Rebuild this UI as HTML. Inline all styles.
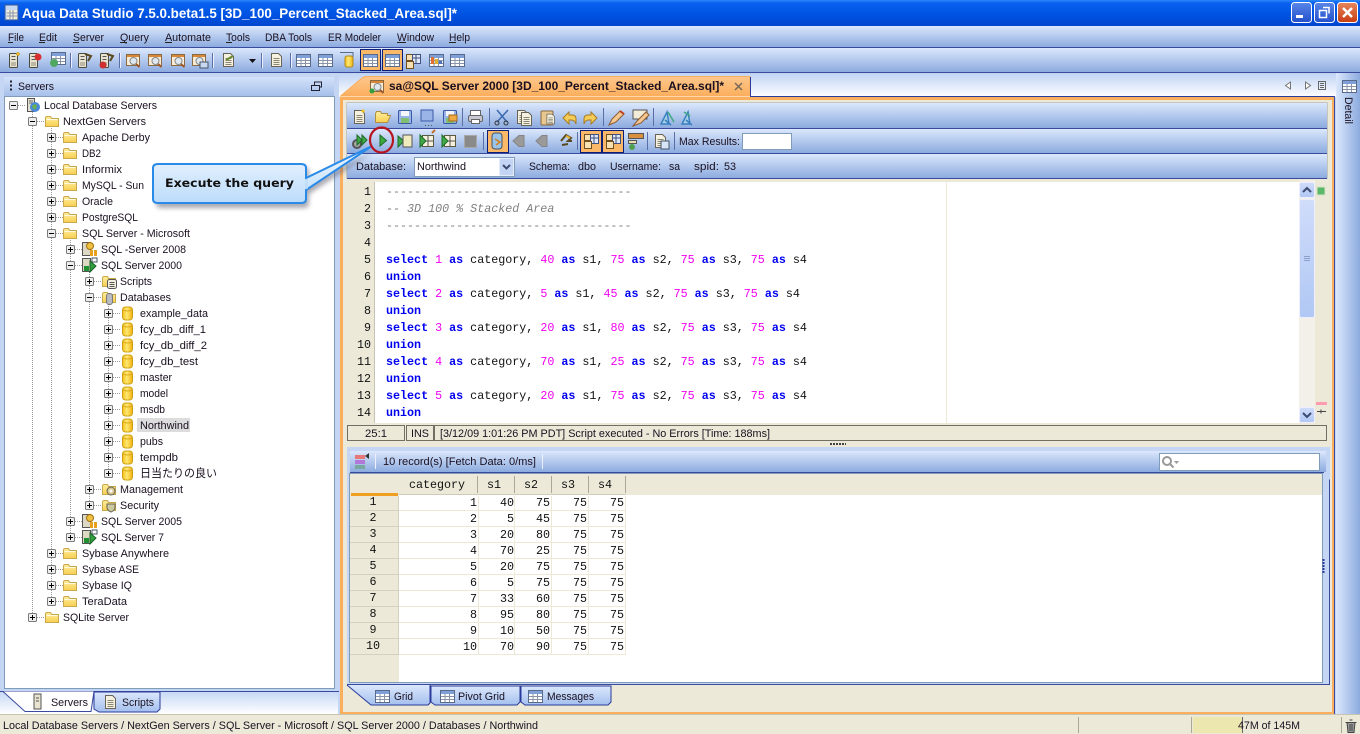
<!DOCTYPE html>
<html><head><meta charset="utf-8"><title>Aqua Data Studio</title>
<style>
html,body{margin:0;padding:0;background:#ece9d8;width:1360px;height:734px;overflow:hidden}
svg{display:block;position:absolute;left:0;top:0}
text{font-family:"Liberation Sans","Noto Sans CJK JP",sans-serif;font-size:11.4px;fill:#1a1020}
.m{font-family:"Liberation Mono",monospace;font-size:11.7px;fill:#111}
.k{font-weight:bold;fill:#0000f0}.n{fill:#f000f0}.c{fill:#808080;font-style:italic}.d{fill:#808080}
.r{text-anchor:end}.gc{text-anchor:middle}
</style></head><body>
<svg width="1360" height="734" viewBox="0 0 1360 734" xmlns="http://www.w3.org/2000/svg">
<defs>
<linearGradient id="title" x1="0" y1="0" x2="0" y2="1"><stop offset="0" stop-color="#2a86fb"/><stop offset=".12" stop-color="#0a60ee"/><stop offset=".5" stop-color="#0055e5"/><stop offset="1" stop-color="#0046cf"/></linearGradient>
<linearGradient id="bar" x1="0" y1="0" x2="0" y2="1"><stop offset="0" stop-color="#dbe7fc"/><stop offset="1" stop-color="#8cabdf"/></linearGradient>
<linearGradient id="tabs" x1="0" y1="0" x2="0" y2="1"><stop offset="0" stop-color="#bfd3f4"/><stop offset="1" stop-color="#ffffff"/></linearGradient>
<linearGradient id="head" x1="0" y1="0" x2="0" y2="1"><stop offset="0" stop-color="#d4e2fa"/><stop offset="1" stop-color="#a6c0ea"/></linearGradient>
<linearGradient id="orange" x1="0" y1="0" x2="0" y2="1"><stop offset="0" stop-color="#fdc78c"/><stop offset="1" stop-color="#fbae5c"/></linearGradient>
<linearGradient id="side" x1="0" y1="0" x2="1" y2="0"><stop offset="0" stop-color="#dbe7fc"/><stop offset="1" stop-color="#8cabdf"/></linearGradient>
<linearGradient id="tabb" x1="0" y1="0" x2="0" y2="1"><stop offset="0" stop-color="#dbe7fc"/><stop offset="1" stop-color="#a4c0ee"/></linearGradient>
<linearGradient id="call" x1="0" y1="0" x2="0" y2="1"><stop offset="0" stop-color="#f2f8ff"/><stop offset="1" stop-color="#bcdcfa"/></linearGradient>
<linearGradient id="fold" x1="0" y1="0" x2="0" y2="1"><stop offset="0" stop-color="#ffeea0"/><stop offset="1" stop-color="#f8cf50"/></linearGradient>
<linearGradient id="cyl" x1="0" y1="0" x2="1" y2="0"><stop offset="0" stop-color="#f4c020"/><stop offset=".45" stop-color="#ffe870"/><stop offset="1" stop-color="#eeb010"/></linearGradient>
<linearGradient id="close" x1="0" y1="0" x2="0" y2="1"><stop offset="0" stop-color="#e8865e"/><stop offset="1" stop-color="#c83c10"/></linearGradient>
<linearGradient id="wbtn" x1="0" y1="0" x2="0" y2="1"><stop offset="0" stop-color="#5a86e8"/><stop offset="1" stop-color="#2250cc"/></linearGradient>
<linearGradient id="sb" x1="0" y1="0" x2="0" y2="1"><stop offset="0" stop-color="#d0dcfa"/><stop offset="1" stop-color="#b0c8f4"/></linearGradient>
<filter id="sh" x="-20%" y="-20%" width="140%" height="150%"><feGaussianBlur stdDeviation="2.5"/></filter>

<g id="pl"><rect x=".5" y=".5" width="8" height="8" rx="1" fill="#eee" stroke="#7b7b7b"/><path d="M2 4.500h5M4.500 2v5" stroke="#000"/></g>
<g id="mi"><rect x=".5" y=".5" width="8" height="8" rx="1" fill="#eee" stroke="#7b7b7b"/><path d="M2 4.500h5" stroke="#000"/></g>
<g id="fo"><path d="M.5 3.500v9h13v-8h-7l-1-2h-4z" fill="url(#fold)" stroke="#c8a848"/><path d="M1.500 5.500h11" stroke="#fffbe0"/></g>
<g id="db"><rect x="2.500" y="1" width="10" height="13" rx="3" fill="url(#cyl)" stroke="#d0a010"/><path d="M3 4q4.500 2 9 0" stroke="#d8a820" fill="none"/></g>
<g id="srv"><rect x="1.500" y=".5" width="7" height="13" fill="#e4e0d0" stroke="#555"/><path d="M3 3h4M3 5h4" stroke="#666"/><circle cx="9" cy="9" r="5" fill="#4a8ad8"/><path d="M6 8q3-3 5-1l-1 4q-3 1-4-3z" fill="#6ab050"/></g>
<g id="s08"><rect x=".5" y="1.500" width="8" height="13" fill="#ddd8c4" stroke="#555"/><circle cx="8" cy="5" r="3.500" fill="#f0c040" stroke="#a07010"/><rect x="8" y="9" width="3" height="6" fill="#e8a020"/><rect x="12" y="9" width="3" height="6" fill="#e8a020"/></g>
<g id="s00"><rect x=".5" y="1.500" width="8" height="13" fill="#ddd8c4" stroke="#555"/><path d="M8 4l6 5-6 6z" fill="#30a040" stroke="#186020"/><rect x="2" y="9" width="5" height="5" fill="#209030"/><rect x="10" y="1" width="5" height="4" fill="#fff" stroke="#456"/></g>
<g id="scr"><path d="M.5 3.500v9h13v-8h-7l-1-2h-4z" fill="url(#fold)" stroke="#c8a848"/><rect x="5.500" y="5.500" width="9" height="9" rx="2" fill="#f4f0e0" stroke="#555"/><path d="M7.500 8.500h5M7.500 10.500h5M7.500 12.500h5" stroke="#555"/></g>
<g id="dbs"><path d="M.5 3.500v9h13v-8h-7l-1-2h-4z" fill="url(#fold)" stroke="#c8a848"/><rect x="4.500" y="3.500" width="6" height="11" rx="2.500" fill="#b8bcc0" stroke="#777"/></g>
<g id="mgt"><path d="M.5 3.500v9h13v-8h-7l-1-2h-4z" fill="url(#fold)" stroke="#c8a848"/><circle cx="9" cy="9" r="4" fill="#d8c890" stroke="#665"/><circle cx="9" cy="9" r="1.500" fill="#fff"/></g>
<g id="sec"><path d="M.5 3.500v9h13v-8h-7l-1-2h-4z" fill="url(#fold)" stroke="#c8a848"/><path d="M5 6h8v4q-1 3-4 4-3-1-4-4z" fill="#ccc8a0" stroke="#665"/></g>

<g id="doc"><path d="M2.500 1.500h7l3 3v10h-10z" fill="#f5f1e0" stroke="#6a6458"/><path d="M4.500 6.500h6M4.500 8.500h6M4.500 10.500h6M4.500 12.500h6" stroke="#8a8470"/></g>
<g id="sb1"><rect x=".5" y=".5" width="8" height="14" rx="1" fill="#e8e4d0" stroke="#4a4a40"/><path d="M2.500 3.500h4M2.500 6.500h4" stroke="#555"/><rect x="2" y="9" width="5" height="4" fill="#bcb8a4"/></g>
<g id="tbl"><rect x="1.500" y="2.500" width="14" height="12" fill="#fff" stroke="#5a6a8a"/><rect x="2" y="3" width="13" height="3" fill="#7f9fd8"/><path d="M2 8.500h13M2 11.500h13M6 6v8M10.500 6v8" stroke="#8a94a8"/></g>
<g id="mag"><rect x="1.500" y="2.500" width="13" height="11" fill="#f6ecd8" stroke="#8a6a40"/><rect x="2" y="3" width="12" height="2" fill="#d88838"/><circle cx="8.500" cy="9" r="3.500" fill="#dfe8f0" stroke="#888"/><path d="M11 12l3.500 3" stroke="#a05828" stroke-width="2"/></g>
<g id="prt"><rect x="3.500" y="1.500" width="10" height="5" fill="#fff" stroke="#666"/><rect x="1.500" y="6.500" width="14" height="6" rx="1.500" fill="#c8c8d0" stroke="#666"/><rect x="4.500" y="10.500" width="8" height="4" fill="#fff" stroke="#666"/></g>
<g id="sav"><rect x="1.500" y="1.500" width="13" height="13" rx="1" fill="#9ab4e8" stroke="#3a5aa8"/><rect x="4" y="2" width="8" height="5" fill="#f4f6fc"/><rect x="4" y="9" width="8" height="5" fill="#80c070"/></g>
<g id="ofo"><path d="M.5 4.500v9h12l3-7h-3v-2h-6l-1-2h-4z" fill="url(#fold)" stroke="#b09040"/></g>
<g id="rgrid"><rect x="3.500" y="2.500" width="11" height="11" fill="#f6f0dc" stroke="#5a5a40"/><path d="M3.500 8h11M9 3v10" stroke="#555"/><path d="M1 2l6 6-6 6z" fill="#40a848" stroke="#1c6c24"/></g>
<g id="back"><path d="M8 2.500h5v11H8l-6-5.500z" fill="#9a9a9a" stroke="#848484"/></g>
<g id="plug"><path d="M3 9l5-6 5 3-3 3h4M4 13l6-1" stroke="#5a4a20" stroke-width="2" fill="none"/><path d="M8 4l4 2" stroke="#e8b030" stroke-width="2"/></g>
<g id="gg"><rect x="1.500" y="1.500" width="7" height="6" fill="#f8e0b0" stroke="#705020"/><rect x="7.500" y="1.500" width="8" height="9" fill="#e0e8f8" stroke="#405080"/><rect x="1.500" y="8.500" width="7" height="7" fill="#f8e0b0" stroke="#705020"/><path d="M7.500 5h8M11 1.500v9" stroke="#405080"/></g>
</defs>

<!-- base -->
<rect width="1360" height="734" fill="#c4d6f4"/>
<!-- title bar -->
<rect width="1360" height="26" fill="url(#title)"/>
<rect x="5" y="5" width="13" height="15" fill="#c8d8f0" stroke="#385a9a"/><rect x="7" y="10" width="10" height="9" fill="#f4f0d8"/><path d="M7 13h10M7 16h10M10 10v9M13 10v9" stroke="#8a94b0"/>
<text x="22" y="18" textLength="435" lengthAdjust="spacingAndGlyphs" style="font-size:14px;font-weight:bold;fill:#fff">Aqua Data Studio 7.5.0.beta1.5 [3D_100_Percent_Stacked_Area.sql]*</text>
<rect x="1291.500" y="2.500" width="20" height="20" rx="3" fill="url(#wbtn)" stroke="#fff"/><rect x="1296" y="15" width="7" height="3" fill="#fff"/>
<rect x="1314.500" y="2.500" width="20" height="20" rx="3" fill="url(#wbtn)" stroke="#fff"/><path d="M1323 7.500h6v6M1319.500 10.500h7v7h-7z" stroke="#fff" stroke-width="1.500" fill="none"/>
<rect x="1337.500" y="2.500" width="20" height="20" rx="3" fill="url(#close)" stroke="#fff"/><path d="M1343 8l9 9M1352 8l-9 9" stroke="#fff" stroke-width="2.500"/>

<!-- menu -->
<rect y="26" width="1360" height="21" fill="url(#bar)"/><rect y="47" width="1360" height="1" fill="#3a4a9c"/>
<text x="8" y="41" textLength="16" lengthAdjust="spacingAndGlyphs">File</text><text x="39" y="41" textLength="18" lengthAdjust="spacingAndGlyphs">Edit</text><text x="73" y="41" textLength="31" lengthAdjust="spacingAndGlyphs">Server</text><text x="120" y="41" textLength="29" lengthAdjust="spacingAndGlyphs">Query</text><text x="165" y="41" textLength="46" lengthAdjust="spacingAndGlyphs">Automate</text><text x="226" y="41" textLength="24" lengthAdjust="spacingAndGlyphs">Tools</text><text x="265" y="41" textLength="47" lengthAdjust="spacingAndGlyphs">DBA Tools</text><text x="328" y="41" textLength="53" lengthAdjust="spacingAndGlyphs">ER Modeler</text><text x="397" y="41" textLength="37" lengthAdjust="spacingAndGlyphs">Window</text><text x="449" y="41" textLength="21" lengthAdjust="spacingAndGlyphs">Help</text>
<path d="M8 42.500h5M39 42.500h6M73 42.500h6M120 42.500h7M165 42.500h7M226 42.500h6M397 42.500h9M449 42.500h7" stroke="#222"/>

<!-- main toolbar -->
<rect y="48" width="1360" height="24" fill="url(#bar)"/><rect y="72" width="1360" height="1" fill="#3a4a9c"/>
<use href="#sb1" x="9" y="53"/><path d="M18 52l2 2-2 2-2-2z" fill="#f0c020" stroke="#b08010" stroke-width=".5"/>
<use href="#sb1" x="29" y="53"/><circle cx="38" cy="57" r="3.500" fill="#d83030"/>
<use href="#tbl" x="50" y="50"/><circle cx="54" cy="63" r="4" fill="#50a860"/>
<use href="#sb1" x="78" y="53"/><path d="M85 54l6 2-3 5" stroke="#5a4a20" stroke-width="2" fill="none"/>
<use href="#sb1" x="100" y="53"/><circle cx="103" cy="65" r="3.500" fill="#d03030"/><path d="M107 54l6 2-3 5" stroke="#5a4a20" stroke-width="2" fill="none"/>
<use href="#mag" x="125" y="52"/><use href="#mag" x="147" y="52"/><use href="#mag" x="170" y="52"/><use href="#mag" x="191" y="52"/><rect x="200" y="62" width="8" height="6" fill="#c8d8f0" stroke="#456"/>
<use href="#doc" x="221" y="52"/><path d="M226 60l7-4" stroke="#6a8a30" stroke-width="2"/>
<path d="M249 59h7l-3.500 4z" fill="#111"/>
<use href="#doc" x="269" y="52"/><use href="#tbl" x="295" y="52"/><use href="#tbl" x="317" y="52"/>
<rect x="345" y="56" width="8" height="11" rx="2" fill="url(#cyl)" stroke="#b08818"/><path d="M340 52.500h13v4" fill="none" stroke="#5a6a8a"/>
<rect x="360.500" y="49.500" width="20" height="21" fill="#fbb868" stroke="#0c1f78" stroke-width="1"/><use href="#tbl" x="362" y="52"/>
<rect x="382.500" y="49.500" width="20" height="21" fill="#fbb868" stroke="#0c1f78"/><use href="#tbl" x="384" y="52"/>
<use href="#gg" x="405" y="53"/><use href="#tbl" x="428" y="52"/><rect x="431" y="57" width="3" height="7" fill="#e07030"/><rect x="435" y="59" width="3" height="5" fill="#e0b030"/><rect x="439" y="61" width="3" height="3" fill="#5070c0"/>
<use href="#tbl" x="449" y="52"/>
<path d="M70.500 53v15M119.500 53v15M212.500 53v15M261.500 53v15M290.500 53v15" stroke="#5a6ea8"/><path d="M71.500 53v15M120.500 53v15M213.500 53v15M262.500 53v15M291.500 53v15" stroke="#eef"/>

<!-- left pane -->
<rect x="0" y="73" width="339" height="642" fill="#c4d6f4"/>
<rect x="4" y="77" width="330" height="19" fill="url(#head)"/>
<path d="M10 81.500h2M10 85.500h2M10 89.500h2" stroke="#223" stroke-width="2"/>
<text x="18" y="90" textLength="36" lengthAdjust="spacingAndGlyphs">Servers</text>
<path d="M311.500 85.500h8v5h-8zM314.500 85v-3h7v5h-2" fill="none" stroke="#223"/>
<rect x="4.500" y="96.500" width="330" height="592" fill="#fff" stroke="#7f9db9"/>
<rect x="0" y="689" width="338" height="25" fill="url(#tabs)"/>
<path d="M0 691.500h339" stroke="#3a4a9c"/>
<path d="M0 691.500h3l22 20h66l3-20" fill="#fff" stroke="#3a4a9c"/>
<path d="M94 692h66v17l-3 3h-58l-5-3z" fill="url(#tabb)" stroke="#2a3a9c"/>
<rect x="34" y="694" width="7" height="15" fill="#e8e4d0" stroke="#555"/><path d="M36 698h3M36 701h3" stroke="#555"/>
<text x="51" y="706" textLength="37" lengthAdjust="spacingAndGlyphs">Servers</text>
<use href="#doc" x="103" y="694"/><text x="122" y="706" textLength="32" lengthAdjust="spacingAndGlyphs">Scripts</text>

<!-- tree guides -->
<g stroke="#999" stroke-dasharray="1 1" fill="none">
<path d="M32.500 110v507M51.500 126v475M70.500 238v299M89.500 270v235M108.500 302v171"/>
<path d="M18 105.500h8M37 121.500h7M56 137.500h7M56 153.500h7M56 169.500h7M56 185.500h7M56 201.500h7M56 217.500h7M56 233.500h7M75 249.500h7M75 265.500h7M94 281.500h7M94 297.500h7"/>
<path d="M113 313.500h7M113 329.500h7M113 345.500h7M113 361.500h7M113 377.500h7M113 393.500h7M113 409.500h7M113 425.500h7M113 441.500h7M113 457.500h7M113 473.500h7"/>
<path d="M94 489.500h7M94 505.500h7M75 521.500h7M75 537.500h7M56 553.500h7M56 569.500h7M56 585.500h7M56 601.500h7M37 617.500h7"/>
</g>
<!-- tree -->
<use href="#mi" x="9" y="101"/><use href="#srv" x="26" y="98"/><text x="44" y="109" textLength="113" lengthAdjust="spacingAndGlyphs">Local Database Servers</text>
<use href="#mi" x="28" y="117"/><use href="#fo" x="45" y="114"/><text x="63" y="125" textLength="83" lengthAdjust="spacingAndGlyphs">NextGen Servers</text>
<use href="#pl" x="47" y="133"/><use href="#fo" x="63" y="130"/><text x="82" y="141" textLength="68" lengthAdjust="spacingAndGlyphs">Apache Derby</text>
<use href="#pl" x="47" y="149"/><use href="#fo" x="63" y="146"/><text x="82" y="157" textLength="19" lengthAdjust="spacingAndGlyphs">DB2</text>
<use href="#pl" x="47" y="165"/><use href="#fo" x="63" y="162"/><text x="82" y="173" textLength="40" lengthAdjust="spacingAndGlyphs">Informix</text>
<use href="#pl" x="47" y="181"/><use href="#fo" x="63" y="178"/><text x="82" y="189" textLength="62" lengthAdjust="spacingAndGlyphs">MySQL - Sun</text>
<use href="#pl" x="47" y="197"/><use href="#fo" x="63" y="194"/><text x="82" y="205" textLength="31" lengthAdjust="spacingAndGlyphs">Oracle</text>
<use href="#pl" x="47" y="213"/><use href="#fo" x="63" y="210"/><text x="82" y="221" textLength="56" lengthAdjust="spacingAndGlyphs">PostgreSQL</text>
<use href="#mi" x="47" y="229"/><use href="#fo" x="63" y="226"/><text x="82" y="237" textLength="108" lengthAdjust="spacingAndGlyphs">SQL Server - Microsoft</text>
<use href="#pl" x="66" y="245"/><use href="#s08" x="82" y="241"/><text x="101" y="253" textLength="85" lengthAdjust="spacingAndGlyphs">SQL -Server 2008</text>
<use href="#mi" x="66" y="261"/><use href="#s00" x="82" y="257"/><text x="101" y="269" textLength="81" lengthAdjust="spacingAndGlyphs">SQL Server 2000</text>
<use href="#pl" x="85" y="277"/><use href="#scr" x="102" y="274"/><text x="120" y="285" textLength="32" lengthAdjust="spacingAndGlyphs">Scripts</text>
<use href="#mi" x="85" y="293"/><use href="#dbs" x="102" y="290"/><text x="120" y="301" textLength="51" lengthAdjust="spacingAndGlyphs">Databases</text>
<use href="#pl" x="104" y="309"/><use href="#db" x="120" y="306"/><text x="140" y="317" textLength="68" lengthAdjust="spacingAndGlyphs">example_data</text>
<use href="#pl" x="104" y="325"/><use href="#db" x="120" y="322"/><text x="140" y="333" textLength="66" lengthAdjust="spacingAndGlyphs">fcy_db_diff_1</text>
<use href="#pl" x="104" y="341"/><use href="#db" x="120" y="338"/><text x="140" y="349" textLength="67" lengthAdjust="spacingAndGlyphs">fcy_db_diff_2</text>
<use href="#pl" x="104" y="357"/><use href="#db" x="120" y="354"/><text x="140" y="365" textLength="58" lengthAdjust="spacingAndGlyphs">fcy_db_test</text>
<use href="#pl" x="104" y="373"/><use href="#db" x="120" y="370"/><text x="140" y="381" textLength="32" lengthAdjust="spacingAndGlyphs">master</text>
<use href="#pl" x="104" y="389"/><use href="#db" x="120" y="386"/><text x="140" y="397" textLength="28" lengthAdjust="spacingAndGlyphs">model</text>
<use href="#pl" x="104" y="405"/><use href="#db" x="120" y="402"/><text x="140" y="413" textLength="25" lengthAdjust="spacingAndGlyphs">msdb</text>
<use href="#pl" x="104" y="421"/><use href="#db" x="120" y="418"/><rect x="137" y="418" width="53" height="14" fill="#dcdcdc"/><text x="140" y="429" textLength="49" lengthAdjust="spacingAndGlyphs">Northwind</text>
<use href="#pl" x="104" y="437"/><use href="#db" x="120" y="434"/><text x="140" y="445" textLength="23" lengthAdjust="spacingAndGlyphs">pubs</text>
<use href="#pl" x="104" y="453"/><use href="#db" x="120" y="450"/><text x="140" y="461" textLength="38" lengthAdjust="spacingAndGlyphs">tempdb</text>
<use href="#pl" x="104" y="469"/><use href="#db" x="120" y="466"/><text x="140" y="477" textLength="77" lengthAdjust="spacingAndGlyphs">日当たりの良い</text>
<use href="#pl" x="85" y="485"/><use href="#mgt" x="102" y="482"/><text x="120" y="493" textLength="63" lengthAdjust="spacingAndGlyphs">Management</text>
<use href="#pl" x="85" y="501"/><use href="#sec" x="102" y="498"/><text x="120" y="509" textLength="39" lengthAdjust="spacingAndGlyphs">Security</text>
<use href="#pl" x="66" y="517"/><use href="#s08" x="82" y="513"/><text x="101" y="525" textLength="81" lengthAdjust="spacingAndGlyphs">SQL Server 2005</text>
<use href="#pl" x="66" y="533"/><use href="#s00" x="82" y="529"/><text x="101" y="541" textLength="63" lengthAdjust="spacingAndGlyphs">SQL Server 7</text>
<use href="#pl" x="47" y="549"/><use href="#fo" x="63" y="546"/><text x="82" y="557" textLength="87" lengthAdjust="spacingAndGlyphs">Sybase Anywhere</text>
<use href="#pl" x="47" y="565"/><use href="#fo" x="63" y="562"/><text x="82" y="573" textLength="57" lengthAdjust="spacingAndGlyphs">Sybase ASE</text>
<use href="#pl" x="47" y="581"/><use href="#fo" x="63" y="578"/><text x="82" y="589" textLength="50" lengthAdjust="spacingAndGlyphs">Sybase IQ</text>
<use href="#pl" x="47" y="597"/><use href="#fo" x="63" y="594"/><text x="82" y="605" textLength="45" lengthAdjust="spacingAndGlyphs">TeraData</text>
<use href="#pl" x="28" y="613"/><use href="#fo" x="45" y="610"/><text x="63" y="621" textLength="66" lengthAdjust="spacingAndGlyphs">SQLite Server</text>

<!-- right strip -->
<rect x="339" y="73" width="999" height="24" fill="url(#tabs)"/>
<path d="M1290.500 82l-5 3.500 5 3.500zM1305.500 82l5 3.500-5 3.500z" fill="#fff" stroke="#777"/>
<rect x="1318.500" y="81.500" width="7" height="8" fill="none" stroke="#666"/><path d="M1320 83.500h4M1320 85.500h4M1320 87.500h4" stroke="#666"/>
<rect x="1336" y="73" width="24" height="642" fill="url(#side)"/>
<use href="#tbl" x="1341" y="78"/>
<text transform="translate(1345,97) rotate(90)" textLength="27" lengthAdjust="spacingAndGlyphs">Detail</text>

<!-- doc tab + frame -->
<path d="M340 96.500L362 78q2-1.500 4-1.500h384v20" fill="url(#orange)" stroke="#fbae5c"/>
<path d="M750.500 77v20" stroke="#2a3a9c"/><path d="M750 96.500H1335" stroke="#2a3a9c"/>
<use href="#mag" x="369" y="78"/><circle cx="372" cy="91" r="2.500" fill="#30a040"/>
<text x="389" y="90" textLength="335" lengthAdjust="spacingAndGlyphs" style="font-weight:bold;font-size:12px">sa@SQL Server 2000 [3D_100_Percent_Stacked_Area.sql]*</text>
<path d="M735 83l7 7M742 83l-7 7" stroke="#7a6a5a" stroke-width="1.500"/>
<rect x="340" y="97" width="995" height="618" fill="#fbae5c"/><rect x="1334" y="96" width="1" height="619" fill="#3a4a9c"/>
<rect x="343" y="100" width="989" height="612" fill="#ece9d8"/>

<!-- editor toolbars -->
<rect x="346.500" y="102.500" width="981" height="76" fill="#a0a0a0"/>
<rect x="347" y="103" width="980" height="25" fill="url(#bar)"/><rect x="347" y="128" width="980" height="1" fill="#3a4a9c"/>
<rect x="347" y="129" width="980" height="24" fill="url(#bar)"/><rect x="347" y="153" width="980" height="1" fill="#3a4a9c"/>
<rect x="347" y="154" width="980" height="24" fill="url(#bar)"/><rect x="347" y="178" width="980" height="1" fill="#3a4a9c"/>

<use href="#doc" x="352" y="109"/><path d="M363 109l2 2-2 2-2-2z" fill="#f0c020"/>
<use href="#ofo" x="375" y="109"/><use href="#sav" x="397" y="109"/>
<rect x="421" y="110" width="12" height="11" fill="#9ab4e8" stroke="#3a5aa8"/><path d="M425 125.500h9" stroke="#555" stroke-dasharray="1 2"/>
<use href="#sav" x="442" y="109"/><rect x="449" y="115" width="8" height="6" fill="#f0a840" stroke="#a06a20"/>
<path d="M462.500 108v18M489.500 108v18M603.500 108v18M653.500 108v18" stroke="#5a6ea8"/>
<use href="#prt" x="467" y="109"/>
<path d="M497 110l10 12M508 110l-11 12" stroke="#3a6ab0" stroke-width="1.500"/><circle cx="497" cy="123" r="2" fill="none" stroke="#333"/><circle cx="506" cy="123" r="2" fill="none" stroke="#333"/>
<use href="#doc" x="515" y="109"/><use href="#doc" x="519" y="111"/>
<rect x="541" y="111" width="12" height="14" rx="1" fill="#e8c890" stroke="#8a6a40"/><use href="#doc" transform="translate(545 113) scale(.75)"/>
<path d="M563 118l6-6v3h3q4 0 4 4v5q-1-4-5-4h-2v4z" fill="#f6cc58" stroke="#a87c20"/>
<path d="M597 118l-6-6v3h-3q-4 0-4 4v5q1-4 5-4h2v4z" fill="#f6cc58" stroke="#a87c20"/>
<path d="M609 125l3-6 8-8 4 3-8 8z" fill="#f4c890" stroke="#8a5a30"/><path d="M620 111l4 3" stroke="#c04020" stroke-width="2"/>
<rect x="633" y="110" width="14" height="9" fill="#f0ecd8" stroke="#555"/><path d="M633 126l5-6 8-8 3 3-8 8z" fill="#f4c890" stroke="#8a5a30"/>
<path d="M661 124l6-12 2 12zM665 120l6 5" stroke="#3a80c0" stroke-width="1.500" fill="#a8d0e8"/><path d="M668 112l6 10" stroke="#40a880" stroke-width="1.500"/>
<path d="M682 124l6-12 2 12zM686 120l6 5" stroke="#3a80c0" stroke-width="1.500" fill="#a8d0e8"/><path d="M684 112l6 4" stroke="#40a880" stroke-width="1.500"/>

<circle cx="357" cy="144" r="4" fill="#aaa" stroke="#555" stroke-width="2"/><path d="M357 135l5 5-5 5zM362 135l5 5-5 5z" fill="#40a848" stroke="#1c6c24"/>
<path d="M380 135l6.500 5.500-6.500 5.500z" fill="#3caa40" stroke="#1c6c24"/>
<path d="M398 136l6 5-6 6z" fill="#40a848" stroke="#1c6c24"/><rect x="403" y="135" width="9" height="12" fill="#f0ecc0" stroke="#555"/>
<use href="#rgrid" x="419" y="133"/><path d="M432 133l3-3" stroke="#c07030" stroke-width="2"/>
<use href="#rgrid" x="441" y="133"/>
<rect x="464.500" y="135.500" width="12" height="12" fill="#8a8a8a" stroke="#a8a8a8"/>
<path d="M483.500 132v18M577.500 132v18M647.500 132v18M674.500 132v18" stroke="#5a6ea8"/>
<rect x="487.500" y="130.500" width="21" height="22" fill="#fbb868" stroke="#0c1f78"/><rect x="492" y="133" width="10" height="16" rx="3" fill="#9ac4e8" stroke="#456"/><path d="M495 139l5 3-4 3" stroke="#d08020" stroke-width="1.500" fill="none"/>
<use href="#back" x="511" y="133"/><use href="#back" x="534" y="133"/>
<use href="#plug" x="558" y="132"/>
<rect x="580.500" y="130.500" width="21" height="22" fill="#fbb868" stroke="#0c1f78"/><use href="#gg" x="583" y="133"/>
<rect x="602.500" y="130.500" width="21" height="22" fill="#fbb868" stroke="#0c1f78"/><use href="#gg" x="605" y="133"/>
<rect x="628.500" y="133.500" width="15" height="5" fill="#d89040" stroke="#555"/><rect x="628.500" y="140.500" width="8" height="3" fill="#e8e0b0" stroke="#555"/><circle cx="632" cy="147" r="3" fill="#50a050"/>
<use href="#doc" x="653" y="133"/><rect x="661" y="141" width="8" height="8" fill="#d8e4f8" stroke="#456"/>
<text x="679" y="145" textLength="61" lengthAdjust="spacingAndGlyphs">Max Results:</text>
<rect x="742.500" y="133.500" width="49" height="16" fill="#fff" stroke="#7f9db9"/>

<text x="356" y="170" textLength="50" lengthAdjust="spacingAndGlyphs">Database:</text>
<rect x="414.500" y="157.500" width="100" height="19" fill="#fff" stroke="#7f9db9"/>
<text x="417" y="170" textLength="49" lengthAdjust="spacingAndGlyphs">Northwind</text>
<rect x="499.500" y="158.500" width="14" height="17" rx="1" fill="#c4d4f4" stroke="#e4ecfc"/><path d="M503 165l3.500 3.500 3.500-3.500" stroke="#3a4a70" stroke-width="2" fill="none"/>
<text x="529" y="170" textLength="41" lengthAdjust="spacingAndGlyphs">Schema:</text><text x="578" y="170" textLength="18" lengthAdjust="spacingAndGlyphs">dbo</text><text x="610" y="170" textLength="51" lengthAdjust="spacingAndGlyphs">Username:</text><text x="669" y="170" textLength="11" lengthAdjust="spacingAndGlyphs">sa</text><text x="694" y="170" textLength="25" lengthAdjust="spacingAndGlyphs">spid:</text><text x="724" y="170" textLength="12" lengthAdjust="spacingAndGlyphs">53</text>

<!-- editor -->
<rect x="347" y="180" width="980" height="243" fill="#fff"/>
<rect x="347" y="180" width="28" height="243" fill="#ece9d8"/><rect x="374" y="180" width="1" height="243" fill="#c8c4b4"/>
<rect x="347" y="180" width="980" height="2" fill="#ece9d8"/>
<path d="M946.500 182v241" stroke="#ece9d8"/>
<rect x="1299" y="180" width="16" height="243" fill="#f2f0e8"/>
<rect x="1315" y="180" width="12" height="243" fill="#ece9d8"/>
<rect x="1317" y="187" width="8" height="8" fill="#5ab868" stroke="#d8e4c8"/>
<rect x="1316" y="402" width="11" height="3" fill="#ff9cb0"/>
<path d="M1317 411.500h9M1321 409.500v4" stroke="#444"/>
<rect x="1299.500" y="182.500" width="15" height="15" rx="2" fill="url(#sb)" stroke="#eef"/><path d="M1303 192l4-4 4 4" stroke="#3a4a70" stroke-width="2" fill="none"/>
<rect x="1299.500" y="199.500" width="15" height="118" rx="2" fill="url(#sb)" stroke="#eef"/><path d="M1304 256.500h6M1304 258.500h6M1304 260.500h6" stroke="#8aa0c8"/>
<rect x="1299.500" y="407.500" width="15" height="15" rx="2" fill="url(#sb)" stroke="#eef"/><path d="M1303 413l4 4 4-4" stroke="#3a4a70" stroke-width="2" fill="none"/>

<g class="ln">
<text class="m r" x="371" y="195">1</text><text class="m r" x="371" y="212">2</text><text class="m r" x="371" y="229">3</text><text class="m r" x="371" y="246">4</text><text class="m r" x="371" y="263">5</text><text class="m r" x="371" y="280">6</text><text class="m r" x="371" y="297">7</text><text class="m r" x="371" y="314">8</text><text class="m r" x="371" y="331">9</text><text class="m r" x="371" y="348">10</text><text class="m r" x="371" y="365">11</text><text class="m r" x="371" y="382">12</text><text class="m r" x="371" y="399">13</text><text class="m r" x="371" y="416">14</text>
</g>
<text class="m d" x="386" y="195" xml:space="preserve">-----------------------------------</text>
<text class="m c" x="386" y="212" xml:space="preserve">-- 3D 100 % Stacked Area</text>
<text class="m d" x="386" y="229" xml:space="preserve">-----------------------------------</text>
<text class="m" x="386" y="263" xml:space="preserve"><tspan class="k">select</tspan> <tspan class="n">1</tspan> <tspan class="k">as</tspan> category, <tspan class="n">40</tspan> <tspan class="k">as</tspan> s1, <tspan class="n">75</tspan> <tspan class="k">as</tspan> s2, <tspan class="n">75</tspan> <tspan class="k">as</tspan> s3, <tspan class="n">75</tspan> <tspan class="k">as</tspan> s4</text>
<text class="m k" x="386" y="280">union</text>
<text class="m" x="386" y="297" xml:space="preserve"><tspan class="k">select</tspan> <tspan class="n">2</tspan> <tspan class="k">as</tspan> category, <tspan class="n">5</tspan> <tspan class="k">as</tspan> s1, <tspan class="n">45</tspan> <tspan class="k">as</tspan> s2, <tspan class="n">75</tspan> <tspan class="k">as</tspan> s3, <tspan class="n">75</tspan> <tspan class="k">as</tspan> s4</text>
<text class="m k" x="386" y="314">union</text>
<text class="m" x="386" y="331" xml:space="preserve"><tspan class="k">select</tspan> <tspan class="n">3</tspan> <tspan class="k">as</tspan> category, <tspan class="n">20</tspan> <tspan class="k">as</tspan> s1, <tspan class="n">80</tspan> <tspan class="k">as</tspan> s2, <tspan class="n">75</tspan> <tspan class="k">as</tspan> s3, <tspan class="n">75</tspan> <tspan class="k">as</tspan> s4</text>
<text class="m k" x="386" y="348">union</text>
<text class="m" x="386" y="365" xml:space="preserve"><tspan class="k">select</tspan> <tspan class="n">4</tspan> <tspan class="k">as</tspan> category, <tspan class="n">70</tspan> <tspan class="k">as</tspan> s1, <tspan class="n">25</tspan> <tspan class="k">as</tspan> s2, <tspan class="n">75</tspan> <tspan class="k">as</tspan> s3, <tspan class="n">75</tspan> <tspan class="k">as</tspan> s4</text>
<text class="m k" x="386" y="382">union</text>
<text class="m" x="386" y="399" xml:space="preserve"><tspan class="k">select</tspan> <tspan class="n">5</tspan> <tspan class="k">as</tspan> category, <tspan class="n">20</tspan> <tspan class="k">as</tspan> s1, <tspan class="n">75</tspan> <tspan class="k">as</tspan> s2, <tspan class="n">75</tspan> <tspan class="k">as</tspan> s3, <tspan class="n">75</tspan> <tspan class="k">as</tspan> s4</text>
<text class="m k" x="386" y="416">union</text>

<!-- status -->
<rect x="347" y="423" width="980" height="19" fill="#ece9d8"/>
<g fill="none" stroke="#716f64"><rect x="347.500" y="425.500" width="57" height="15"/><rect x="406.500" y="425.500" width="27" height="15"/><rect x="434.500" y="425.500" width="892" height="15"/></g>
<text x="365" y="437" textLength="22" lengthAdjust="spacingAndGlyphs">25:1</text><text x="411" y="437" textLength="18" lengthAdjust="spacingAndGlyphs">INS</text>
<text x="440" y="437" textLength="330" lengthAdjust="spacingAndGlyphs">[3/12/09 1:01:26 PM PDT] Script executed - No Errors [Time: 188ms]</text>
<path d="M830 444h16" stroke="#444" stroke-dasharray="2 1" stroke-width="2"/>

<!-- results -->
<rect x="347" y="447" width="983" height="238" fill="#c4d6f4"/>
<rect x="350" y="451" width="976" height="21" fill="url(#bar)"/><rect x="350" y="472" width="974" height="1" fill="#3a4a9c"/>
<rect x="355" y="455" width="10" height="4" fill="#e87878"/><rect x="355" y="460" width="10" height="4" fill="#b078d8"/><rect x="355" y="465" width="10" height="4" fill="#78a8a0"/><path d="M369 453v6l-4-3z" fill="#333"/>
<path d="M375.500 454v15M542.500 454v15" stroke="#eef"/>
<text x="383" y="465" textLength="153" lengthAdjust="spacingAndGlyphs">10 record(s) [Fetch Data: 0/ms]</text>
<rect x="1159.500" y="453.500" width="160" height="17" fill="#fff" stroke="#7f9db9"/>
<circle cx="1167" cy="461" r="4" fill="none" stroke="#999" stroke-width="2"/><path d="M1170 464l3.500 3.500" stroke="#999" stroke-width="2"/><path d="M1174 461h5l-2.500 3z" fill="#999"/>
<rect x="349.500" y="473.500" width="973" height="209" fill="#fff" stroke="#7f9db9"/>
<rect x="350" y="474" width="972" height="21" fill="#ece9d8"/>
<rect x="350" y="474" width="49" height="208" fill="#ece9d8"/>
<rect x="351" y="493" width="47" height="3" fill="#f0a020"/>
<path d="M477.500 476v17M514.500 476v17M551.500 476v17M588.500 476v17M625.500 476v17" stroke="#aca899"/>
<path d="M399 494.500h227" stroke="#cfcbb8"/>
<text class="m gc" x="437" y="488">category</text><text class="m gc" x="494" y="488">s1</text><text class="m gc" x="531" y="488">s2</text><text class="m gc" x="568" y="488">s3</text><text class="m gc" x="605" y="488">s4</text>
<g stroke="#ece9d8">
<path d="M399 510.500h227M399 526.500h227M399 542.500h227M399 558.500h227M399 574.500h227M399 590.500h227M399 606.500h227M399 622.500h227M399 638.500h227M399 654.500h227"/>
<path d="M478.500 496v159M514.500 496v159M551.500 496v159M588.500 496v159M625.500 496v159"/>
</g>
<path d="M350 510.500h49M350 526.500h49M350 542.500h49M350 558.500h49M350 574.500h49M350 590.500h49M350 606.500h49M350 622.500h49M350 638.500h49M350 654.500h49" stroke="#d4d0c0"/><path d="M398.500 496v159" stroke="#d4d0c0"/>
<g>
<text class="m gc" x="373" y="505">1</text><text class="m gc" x="373" y="521">2</text><text class="m gc" x="373" y="537">3</text><text class="m gc" x="373" y="553">4</text><text class="m gc" x="373" y="569">5</text><text class="m gc" x="373" y="585">6</text><text class="m gc" x="373" y="601">7</text><text class="m gc" x="373" y="617">8</text><text class="m gc" x="373" y="633">9</text><text class="m gc" x="373" y="649">10</text>
</g>
<g>
<text class="m r" x="477" y="506">1</text><text class="m r" x="514" y="506">40</text><text class="m r" x="550" y="506">75</text><text class="m r" x="587" y="506">75</text><text class="m r" x="624" y="506">75</text>
<text class="m r" x="477" y="522">2</text><text class="m r" x="514" y="522">5</text><text class="m r" x="550" y="522">45</text><text class="m r" x="587" y="522">75</text><text class="m r" x="624" y="522">75</text>
<text class="m r" x="477" y="538">3</text><text class="m r" x="514" y="538">20</text><text class="m r" x="550" y="538">80</text><text class="m r" x="587" y="538">75</text><text class="m r" x="624" y="538">75</text>
<text class="m r" x="477" y="554">4</text><text class="m r" x="514" y="554">70</text><text class="m r" x="550" y="554">25</text><text class="m r" x="587" y="554">75</text><text class="m r" x="624" y="554">75</text>
<text class="m r" x="477" y="570">5</text><text class="m r" x="514" y="570">20</text><text class="m r" x="550" y="570">75</text><text class="m r" x="587" y="570">75</text><text class="m r" x="624" y="570">75</text>
<text class="m r" x="477" y="586">6</text><text class="m r" x="514" y="586">5</text><text class="m r" x="550" y="586">75</text><text class="m r" x="587" y="586">75</text><text class="m r" x="624" y="586">75</text>
<text class="m r" x="477" y="602">7</text><text class="m r" x="514" y="602">33</text><text class="m r" x="550" y="602">60</text><text class="m r" x="587" y="602">75</text><text class="m r" x="624" y="602">75</text>
<text class="m r" x="477" y="618">8</text><text class="m r" x="514" y="618">95</text><text class="m r" x="550" y="618">80</text><text class="m r" x="587" y="618">75</text><text class="m r" x="624" y="618">75</text>
<text class="m r" x="477" y="634">9</text><text class="m r" x="514" y="634">10</text><text class="m r" x="550" y="634">50</text><text class="m r" x="587" y="634">75</text><text class="m r" x="624" y="634">75</text>
<text class="m r" x="477" y="650">10</text><text class="m r" x="514" y="650">70</text><text class="m r" x="550" y="650">90</text><text class="m r" x="587" y="650">75</text><text class="m r" x="624" y="650">75</text>
</g>
<path d="M1323.500 559v14" stroke="#2a3a9c" stroke-dasharray="2 1" stroke-width="2"/>
<path d="M347 684.500h982.500v-205" fill="none" stroke="#3a4a9c"/>
<rect x="347" y="685" width="985" height="27" fill="#ece9d8"/>
<path d="M347 684.500h983" stroke="#3a4a9c"/>
<path d="M347 685l24 20h57l2-2v-18" fill="url(#tabb)" stroke="#2a3a9c"/>
<path d="M431 686h89v16l-3 3h-82l-4-3z" fill="url(#tabb)" stroke="#2a3a9c"/>
<path d="M521 686h90v16l-3 3h-83l-4-3z" fill="url(#tabb)" stroke="#2a3a9c"/>
<use href="#tbl" x="374" y="688"/><text x="394" y="700" textLength="19" lengthAdjust="spacingAndGlyphs">Grid</text>
<use href="#tbl" x="439" y="688"/><text x="458" y="700" textLength="47" lengthAdjust="spacingAndGlyphs">Pivot Grid</text>
<use href="#tbl" x="527" y="688"/><text x="547" y="700" textLength="47" lengthAdjust="spacingAndGlyphs">Messages</text>

<!-- app status -->
<rect y="715" width="1360" height="19" fill="#ece9d8"/><rect y="714" width="1360" height="1" fill="#c8c4b4"/>
<text x="3" y="729" textLength="535" lengthAdjust="spacingAndGlyphs">Local Database Servers / NextGen Servers / SQL Server - Microsoft / SQL Server 2000 / Databases / Northwind</text>
<path d="M1078.500 717v16M1191.500 717v16M1341.500 717v16" stroke="#aca899"/>
<rect x="1193" y="717" width="50" height="16" fill="#ebe7ae"/><rect x="1242" y="717" width="1" height="16" fill="#666"/>
<text x="1238" y="729" textLength="62" lengthAdjust="spacingAndGlyphs">47M of 145M</text>
<path d="M1345.500 722.500h11M1347 722.500l1 10h6l1-10M1349.500 720h3" fill="#999" stroke="#444"/><path d="M1350 724v7M1352 724v7" stroke="#444"/>

<!-- callout -->
<g filter="url(#sh)" opacity=".5" transform="translate(3 4)"><path d="M158 163h143q5 0 5 5v11l66-32-66 43v9q0 5-5 5H158q-5 0-5-5v-31q0-5 5-5z" fill="#556"/></g>
<path d="M158 164h143q5 0 5 4v10l66-32-66 44v9q0 4-5 4H158q-5 0-5-4v-31q0-4 5-4z" fill="url(#call)" stroke="#2a8ae8" stroke-width="2"/>
<rect x="305" y="179" width="3" height="10" fill="#bcdcfa" opacity=".7"/>
<text x="165" y="187" textLength="129" lengthAdjust="spacingAndGlyphs" style="font-family:'DejaVu Sans',sans-serif;font-weight:bold;font-size:11.500px;fill:#111">Execute the query</text>
<ellipse cx="381.500" cy="140" rx="11.500" ry="12.500" fill="none" stroke="#b81420" stroke-width="2.200"/>
</svg>
</body></html>
